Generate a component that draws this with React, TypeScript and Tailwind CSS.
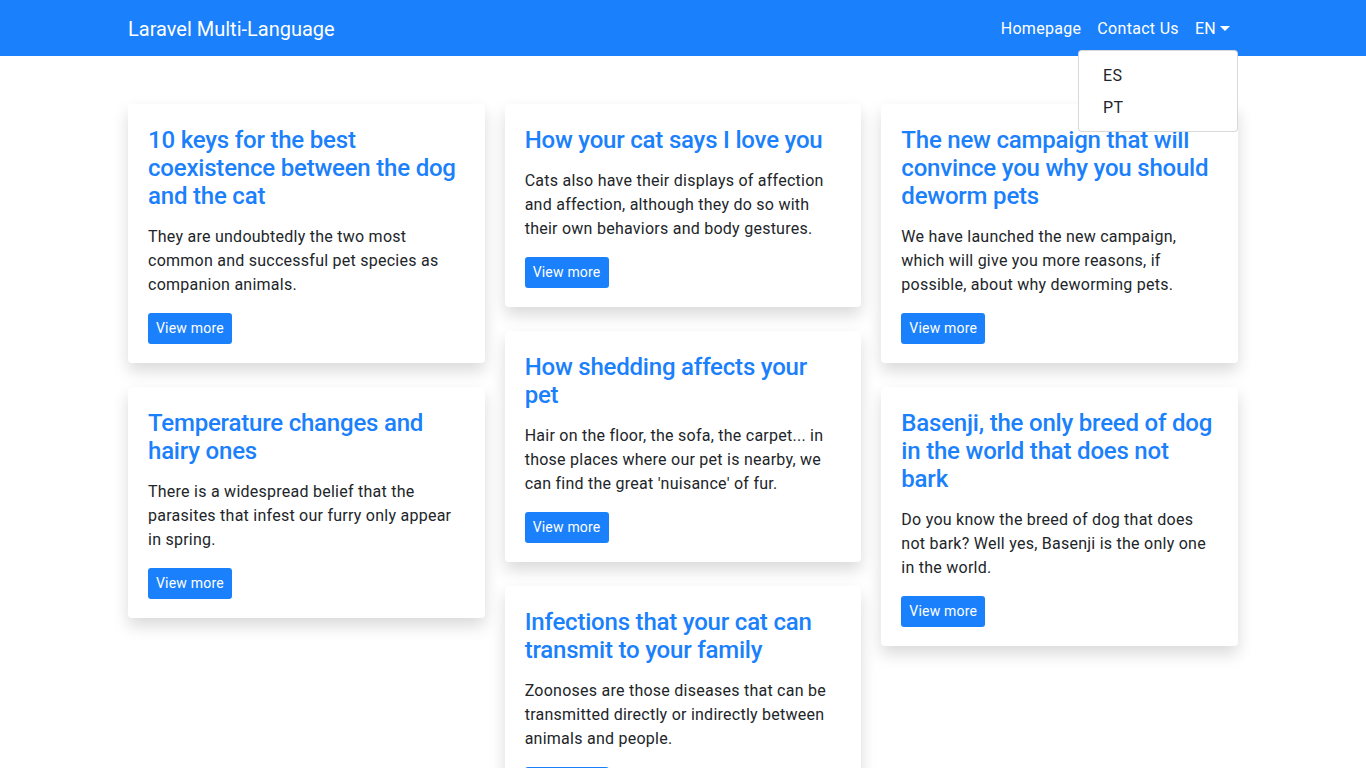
import React from "react";

interface Post {
  title: string;
  excerpt: string;
}

const columns: Post[][] = [
  [
    {
      title: "10 keys for the best coexistence between the dog and the cat",
      excerpt:
        "They are undoubtedly the two most common and successful pet species as companion animals.",
    },
    {
      title: "Temperature changes and hairy ones",
      excerpt:
        "There is a widespread belief that the parasites that infest our furry only appear in spring.",
    },
  ],
  [
    {
      title: "How your cat says I love you",
      excerpt:
        "Cats also have their displays of affection and affection, although they do so with their own behaviors and body gestures.",
    },
    {
      title: "How shedding affects your pet",
      excerpt:
        "Hair on the floor, the sofa, the carpet... in those places where our pet is nearby, we can find the great 'nuisance' of fur.",
    },
    {
      title: "Infections that your cat can transmit to your family",
      excerpt:
        "Zoonoses are those diseases that can be transmitted directly or indirectly between animals and people.",
    },
  ],
  [
    {
      title: "The new campaign that will convince you why you should deworm pets",
      excerpt:
        "We have launched the new campaign, which will give you more reasons, if possible, about why deworming pets.",
    },
    {
      title: "Basenji, the only breed of dog in the world that does not bark",
      excerpt:
        "Do you know the breed of dog that does not bark? Well yes, Basenji is the only one in the world.",
    },
  ],
];

const PostCard: React.FC<{ post: Post }> = ({ post }) => {
  return (
    <div className="bg-white rounded-[4px] shadow-[0_8px_16px_rgba(0,0,0,0.15)] px-5 pt-[22px] pb-[19px]">
      <h4 className="text-[24px] leading-[28px] font-medium tracking-[-0.2px] text-[#1a80fb] mb-[15px]">
        <a href="#">{post.title}</a>
      </h4>
      <p className="text-[16px] leading-[24px] tracking-[0.25px] text-[#212529] mb-4">{post.excerpt}</p>
      <a
        href="#"
        className="inline-block bg-[#1a80fb] text-white text-[14px] leading-[21px] tracking-[0.2px] px-2 py-[5px] rounded-[3px]"
      >
        View more
      </a>
    </div>
  );
};

export default function App() {
  return (
    <div className="min-h-screen bg-white font-['Roboto','Helvetica_Neue',Arial,sans-serif] text-[#212529]">
      <nav className="bg-[#1a80fb] h-14 py-2">
        <div className="w-[1140px] mx-auto px-[15px] flex items-center justify-between">
          <a href="#" className="text-white text-[20px] leading-[30px] pt-[6px] pb-[4px]">
            Laravel Multi-Language
          </a>
          <ul className="flex items-center tracking-[0.3px]">
            <li>
              <a href="#" className="block px-2 pt-[9px] pb-[7px] text-white text-[16px] leading-[24px]">
                Homepage
              </a>
            </li>
            <li>
              <a href="#" className="block px-2 pt-[9px] pb-[7px] text-white text-[16px] leading-[24px]">
                Contact Us
              </a>
            </li>
            <li className="relative">
              <a href="#" className="flex items-center px-2 pt-[9px] pb-[7px] text-white text-[16px] leading-[24px]">
                EN
                <span className="ml-[4px] mb-[2px] inline-block w-0 h-0 border-t-[5px] border-x-[5px] border-t-white border-x-transparent" />
              </a>
              <div className="absolute right-0 top-full mt-[2px] w-[160px] bg-white border border-black/15 rounded-[4px] py-2 z-10">
                <a href="#" className="block px-6 pt-[5px] pb-[3px] text-[16px] leading-[24px] text-[#212529]">
                  ES
                </a>
                <a href="#" className="block px-6 pt-[5px] pb-[3px] text-[16px] leading-[24px] text-[#212529]">
                  PT
                </a>
              </div>
            </li>
          </ul>
        </div>
      </nav>

      <main className="w-[1140px] mx-auto px-[15px] mt-12">
        <div className="grid grid-cols-3 gap-5">
          {columns.map((col, i) => (
            <div key={i} className="flex flex-col gap-6">
              {col.map((post) => (
                <PostCard key={post.title} post={post} />
              ))}
            </div>
          ))}
        </div>
      </main>
    </div>
  );
}
